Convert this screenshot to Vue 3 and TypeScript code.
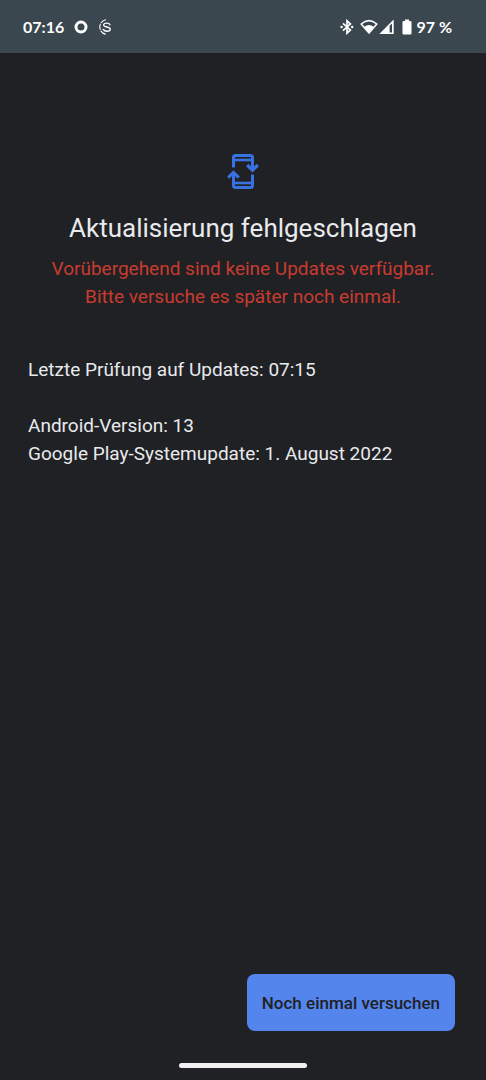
<script setup lang="ts">
import { ref } from 'vue'

const lastCheck = ref('07:15')
const androidVersion = '13'
const playUpdate = '1. August 2022'

function retry(): void {
  const now = new Date()
  lastCheck.value = now.toLocaleTimeString('de-DE', { hour: '2-digit', minute: '2-digit' })
}
</script>

<template>
  <div class="screen">
    <header class="status">
      <div class="group notifications">
        <span class="clock">07:16</span>
        <svg class="ring" viewBox="0 0 14 14" width="14" height="14" aria-hidden="true">
          <circle cx="7" cy="7" r="5" fill="none" stroke="currentColor" stroke-width="3" />
        </svg>
        <svg class="swirl" viewBox="0 0 14 18" width="14" height="18" fill="none" stroke="currentColor" stroke-linecap="round" aria-hidden="true">
          <path d="M7.5 1.8 A7.4 7.4 0 0 0 7.5 16.2" stroke-width="1.1" stroke-dasharray="5.2 1.8" />
          <path d="M12 6.8 C11.2 4.6 5.8 4.4 5.6 7 C5.5 9.6 12.4 8.4 12.3 11.2 C12.2 14 6.4 13.8 5.2 11.4" stroke-width="1.3" />
        </svg>
      </div>
      <div class="group system">
        <svg class="bluetooth" viewBox="0 0 14 16" width="14" height="16" aria-hidden="true">
          <path d="M3 4.4 L10.4 11 L7 14.2 V1.8 L10.4 5 L3 11.6" fill="none" stroke="currentColor" stroke-width="1.7" />
          <circle cx="1.6" cy="8" r="1.2" fill="currentColor" />
          <circle cx="12.2" cy="8" r="1.2" fill="currentColor" />
        </svg>
        <svg class="wifi" viewBox="0 0 18 16" width="18" height="16" aria-hidden="true">
          <path d="M1.2 5 Q9 -1.6 16.8 5 L9 14 Z" fill="none" stroke="currentColor" stroke-width="1.6" stroke-linejoin="round" />
          <path d="M4.1 8 Q9 4.2 13.9 8 L9 14.3 Z" fill="currentColor" />
        </svg>
        <svg class="signal" viewBox="0 0 15 16" width="15" height="16" aria-hidden="true">
          <path d="M0.3 15 L14.7 0.6 V15 Z M10.6 6.8 V13.5 H13 V4.4 Z" fill="currentColor" fill-rule="evenodd" />
        </svg>
        <svg class="battery" viewBox="0 0 10 16" width="10" height="16" aria-hidden="true">
          <path d="M3 0.5 H7 V2 H8.4 Q9.5 2 9.5 3.1 V14.4 Q9.5 15.5 8.4 15.5 H1.6 Q0.5 15.5 0.5 14.4 V3.1 Q0.5 2 1.6 2 H3 Z" fill="currentColor" />
        </svg>
        <span class="percent">97 %</span>
      </div>
    </header>

    <main class="content">
      <svg class="update-icon" viewBox="0 0 32 36" width="32" height="36" fill="none" stroke="currentColor" stroke-width="3" aria-hidden="true">
        <path d="M6.5 14.5 V4.5 Q6.5 2.5 8.5 2.5 H23.5 Q25.5 2.5 25.5 4.5 V17" />
        <path d="M6.5 7 H25.5" stroke-width="2.6" />
        <path d="M20.2 12 L25.5 17.2 L30.8 12" stroke-width="3.2" />
        <path d="M25.5 21.5 V32.5 Q25.5 34.5 23.5 34.5 H8.5 Q6.5 34.5 6.5 32.5 V20" />
        <path d="M6.5 30 H25.5" stroke-width="2.6" />
        <path d="M1.2 24.6 L6.5 19.4 L11.8 24.6" stroke-width="3.2" />
      </svg>
      <h1>Aktualisierung fehlgeschlagen</h1>
      <p class="error">
        Vorübergehend sind keine Updates verfügbar.<br />
        Bitte versuche es später noch einmal.
      </p>
      <section class="details">
        <p>Letzte Prüfung auf Updates: {{ lastCheck }}</p>
        <p class="versions">
          Android-Version: {{ androidVersion }}<br />
          Google Play-Systemupdate: {{ playUpdate }}
        </p>
      </section>
    </main>

    <footer class="actions">
      <button type="button" @click="retry">Noch einmal versuchen</button>
    </footer>
    <div class="nav"><span class="handle"></span></div>
  </div>
</template>

<style>
body {
  margin: 0;
  background: #202124;
}
</style>

<style scoped>
.screen {
  min-height: 100vh;
  display: flex;
  flex-direction: column;
  background: #202124;
  color: #e8eaed;
  font-family: Roboto, "Noto Sans", sans-serif;
}

.status {
  box-sizing: border-box;
  height: 53px;
  padding: 0 34px 0 23px;
  display: flex;
  align-items: center;
  justify-content: space-between;
  background: #3a474e;
  color: #fff;
  font-family: Lato, Roboto, sans-serif;
  font-size: 16px;
  font-weight: 700;
  line-height: 20px;
}

.group {
  display: flex;
  align-items: center;
}

.notifications {
  gap: 10px;
}

.system {
  gap: 4px;
}

.bluetooth {
  margin-right: 2px;
}

.wifi {
  margin-right: -3px;
}

.signal {
  margin-right: 4px;
}

.content {
  flex: 1;
  padding: 100px 28px 0;
  display: flex;
  flex-direction: column;
  align-items: center;
}

.update-icon {
  overflow: visible;
  color: #3871e0;
}

h1 {
  margin: 21px 0 0;
  font-family: Roboto, "Noto Sans", sans-serif;
  font-size: 26px;
  font-weight: 400;
  line-height: 36px;
  text-align: center;
}

p {
  margin: 0;
  font-size: 19px;
  line-height: 28px;
}

.error {
  margin-top: 9px;
  color: #c93b2f;
  text-align: center;
}

.details {
  align-self: stretch;
  margin-top: 45px;
}

.versions {
  margin-top: 28px;
}

.actions {
  display: flex;
  justify-content: flex-end;
  padding: 0 31px;
}

button {
  height: 57px;
  padding: 0 15px;
  border: 0;
  border-radius: 8px;
  background: #5485ed;
  color: #202124;
  font-family: inherit;
  font-size: 17px;
  font-weight: 500;
  cursor: pointer;
}

.nav {
  display: flex;
  justify-content: center;
  padding: 32px 0 12px;
}

.handle {
  width: 128px;
  height: 5px;
  border-radius: 3px;
  background: #f1f1f1;
}
</style>
